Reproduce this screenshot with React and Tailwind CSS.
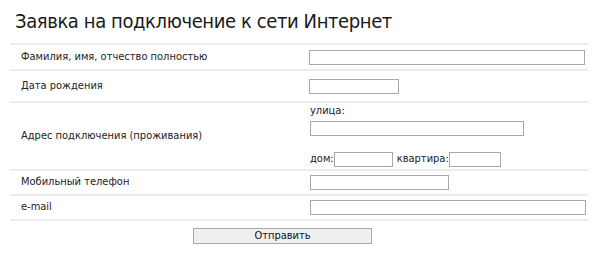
import React from 'react';

const font = { fontFamily: '"DejaVu Sans Condensed", "DejaVu Sans", sans-serif' };

const Field = ({ className }) => (
    <input type="text" className={`h-[15px] border border-[#a9a9a9] bg-white outline-none ${className}`} />
);

const Row = ({ label, className, children }) => (
    <div className={`flex border-t-2 border-[#ececec] ${className}`}>
        <div className="w-[299px] pl-[11px] flex items-center">{label}</div>
        <div className="flex-1 flex flex-col justify-center">{children}</div>
    </div>
);

export default function App() {
    return (
        <div className="bg-white text-[#222] w-[600px] h-[254px]" style={font}>
            <h1 className="h-[43px] pl-[15px] pt-[9px] text-[20px] leading-[24px] tracking-[-0.4px] text-[#1a1a1a]">
                Заявка на подключение к сети Интернет
            </h1>
            <div className="ml-[10px] w-[578px] text-[11px] border-b-2 border-[#ececec]">
                <Row label="Фамилия, имя, отчество полностью" className="h-[26px]">
                    <Field className="w-[276px]" />
                </Row>
                <Row label="Дата рождения" className="h-[32px]">
                    <Field className="w-[90px]" />
                </Row>
                <Row label="Адрес подключения (проживания)" className="h-[68px]">
                    <div className="pl-[1px] leading-[13px]">улица:</div>
                    <Field className="w-[214px] ml-[1px] mt-[4px]" />
                    <div className="flex items-center mt-[15px] pl-[1px]">
                        <span>дом:</span>
                        <Field className="w-[59px] h-[14px]" />
                        <span className="ml-[4px]">квартира:</span>
                        <Field className="w-[52px] h-[14px]" />
                    </div>
                </Row>
                <Row label="Мобильный телефон" className="h-[25px]">
                    <Field className="w-[139px] ml-[1px]" />
                </Row>
                <Row label="e-mail" className="h-[25px]">
                    <Field className="w-[276px] ml-[1px]" />
                </Row>
            </div>
            <div className="flex pl-[193px] pt-[7px]">
                <button className="w-[179px] h-[16px] border border-[#a9a9a9] bg-[#efefef] text-[11px] leading-[14px] text-[#111]">
                    Отправить
                </button>
            </div>
        </div>
    );
}
